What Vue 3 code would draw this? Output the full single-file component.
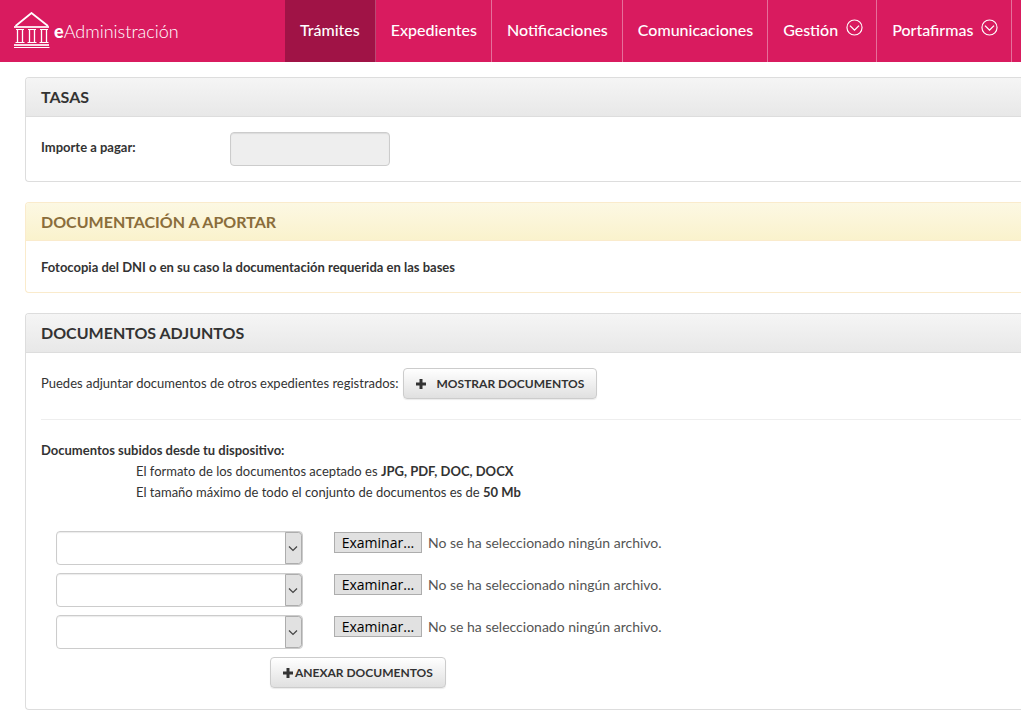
<script setup>
import { ref } from 'vue'

const tabs = [
  { label: 'Trámites', active: true },
  { label: 'Expedientes' },
  { label: 'Notificaciones' },
  { label: 'Comunicaciones' },
  { label: 'Gestión', menu: true },
  { label: 'Portafirmas', menu: true },
]

const uploads = ref([
  { id: 1, type: '', file: '' },
  { id: 2, type: '', file: '' },
  { id: 3, type: '', file: '' },
])
const pickers = ref([])

function choose(index) {
  pickers.value[index].click()
}

function picked(event, upload) {
  upload.file = event.target.files[0]?.name || ''
}
</script>

<template>
  <header class="topbar">
    <a class="brand" href="#">
      <svg class="brand-icon" viewBox="0 0 36 37" aria-hidden="true">
        <g fill="none" stroke="#fff">
          <path d="M1.5 14 17.5 1 34 14" stroke-width="1.8" />
          <path d="M0 15h35" stroke-width="2" opacity=".85" />
          <path d="M2 17.500h8M14 17.500h8M26 17.500h8" stroke-width="1" />
          <path d="M3.500 18v13M8.500 18v13M15.500 18v13M20.500 18v13M27.500 18v13M32.500 18v13" stroke-width="1.300" />
          <path d="M1.500 30.5h9M13.500 30.5h9M25.500 30.5h9" stroke-width="1" />
          <path d="M0 33h35" stroke-width="2" opacity=".85" />
          <path d="M0 35.5h35.500" stroke-width="1.2" />
        </g>
      </svg>
      <span class="brand-name"><b>e</b>Administración</span>
    </a>
    <nav class="tabs">
      <a v-for="tab in tabs" :key="tab.label" class="tab" :class="{ active: tab.active, menu: tab.menu }" href="#">
        {{ tab.label }}
        <svg v-if="tab.menu" class="tab-icon" viewBox="0 0 18 18" aria-hidden="true">
          <circle cx="9" cy="9" r="8" fill="none" stroke="#fff" stroke-width="1.2" />
          <path d="M4.200 7 9 11.800 13.800 7" fill="none" stroke="#fff" stroke-width="1.4" />
        </svg>
      </a>
    </nav>
  </header>

  <main class="content">
    <section class="panel">
      <h2 class="panel-title">TASAS</h2>
      <div class="panel-body fee">
        <label class="fee-label" for="importe">Importe a pagar:</label>
        <input id="importe" class="fee-input" type="text" readonly>
      </div>
    </section>

    <section class="panel warning">
      <h2 class="panel-title">DOCUMENTACIÓN A APORTAR</h2>
      <div class="panel-body">
        <p><b>Fotocopia del DNI o en su caso la documentación requerida en las bases</b></p>
      </div>
    </section>

    <section class="panel">
      <h2 class="panel-title">DOCUMENTOS ADJUNTOS</h2>
      <div class="panel-body attachments">
        <div class="other">
          <span>Puedes adjuntar documentos de otros expedientes registrados:</span>
          <button class="btn wide-gap" type="button">
            <svg class="plus" viewBox="0 0 10 10" aria-hidden="true"><path d="M5 0v10M0 5h10" stroke="#333" stroke-width="3" /></svg>
            MOSTRAR DOCUMENTOS
          </button>
        </div>
        <hr class="rule">
        <p><b>Documentos subidos desde tu dispositivo:</b></p>
        <p class="hint">El formato de los documentos aceptado es <b>JPG, PDF, DOC, DOCX</b></p>
        <p class="hint">El tamaño máximo de todo el conjunto de documentos es de <b>50 Mb</b></p>

        <div class="uploads">
          <div v-for="(upload, index) in uploads" :key="upload.id" class="upload">
            <div class="select">
              <select v-model="upload.type" aria-label="Tipo de documento">
                <option value=""></option>
              </select>
              <svg class="select-arrow" viewBox="0 0 17 32" aria-hidden="true">
                <path d="M0 0h14q3 0 3 3v26q0 3-3 3H0z" fill="#e1e1e1" />
                <path d="M.5.5h13q3 0 3 3v25q0 3-3 3H.5z" fill="none" stroke="#adadad" />
                <path d="M4 14.500l4 4 4-4" fill="none" stroke="#444" stroke-width="1.200" />
              </svg>
            </div>
            <div class="picker">
              <input ref="pickers" type="file" hidden aria-label="Archivo" @change="picked($event, upload)">
              <button class="browse" type="button" @click="choose(index)">Examinar...</button>
              <span>{{ upload.file || 'No se ha seleccionado ningún archivo.' }}</span>
            </div>
          </div>
        </div>
        <button class="btn attach" type="button">
          <svg class="plus" viewBox="0 0 10 10" aria-hidden="true"><path d="M5 0v10M0 5h10" stroke="#333" stroke-width="3" /></svg>
          ANEXAR DOCUMENTOS
        </button>
      </div>
    </section>
  </main>
</template>

<style>
body {
  margin: 0;
  background: #fff;
  overflow-x: hidden;
}
</style>

<style scoped>
.topbar,
.content {
  font-family: Lato, "Liberation Sans", sans-serif;
  font-size: 13px;
  line-height: 21px;
  color: #333;
}
.topbar {
  display: flex;
  height: 62px;
  background: #d91b5f;
}
.brand {
  display: flex;
  align-items: center;
  gap: 4px;
  flex: 0 0 271px;
  padding: 0 0 2px 14px;
  color: #fff;
  text-decoration: none;
}
.brand-icon {
  width: 36px;
  height: 37px;
}
.brand-name {
  font-size: 18px;
  font-weight: 300;
  padding-top: 2px;
}
.brand-name b {
  font-weight: 900;
}
.tabs {
  display: flex;
  min-width: 0;
}
.tab {
  display: flex;
  align-items: center;
  gap: 8px;
  padding: 0 14px 3px 15px;
  border-right: 1px solid #e5709a;
  color: #fff;
  font-size: 16px;
  font-weight: 500;
  text-decoration: none;
  white-space: nowrap;
}
.tab.active {
  padding-right: 15px;
  background: #a01346;
  border-right-color: #b84a72;
}
.tab.menu {
  padding-right: 13px;
}
.tab-icon {
  width: 17px;
  height: 17px;
  margin-bottom: 4px;
}
.content {
  display: flex;
  flex-direction: column;
  gap: 20px;
  padding: 15px 0 13px 25px;
}
.panel {
  border: 1px solid #ddd;
  border-right: 0;
  border-radius: 4px 0 0 4px;
  overflow: hidden;
}
.panel-title {
  margin: 0;
  padding: 0 15px;
  border-bottom: 1px solid #ddd;
  background: linear-gradient(#f5f5f5, #e8e8e8);
  font-size: 16px;
  font-weight: 700;
  line-height: 38px;
}
.warning {
  border-color: #faebcc;
}
.warning .panel-title {
  border-bottom: 0;
  background: linear-gradient(#fcf8e3, #faf2cc);
  box-shadow: inset 0 -1px #faebcc;
  color: #8a6d3b;
}
.panel-body {
  padding: 15px;
}
.panel-body p {
  margin: 0;
}
.warning .panel-body {
  padding: 16px 15px 14px;
}
.fee {
  display: flex;
}
.fee-label {
  width: 189px;
  padding-top: 5px;
  font-weight: 700;
}
.fee-input {
  box-sizing: border-box;
  width: 160px;
  height: 34px;
  padding: 6px 12px;
  border: 1px solid #ccc;
  border-radius: 4px;
  background: #eee;
  box-shadow: inset 0 1px 1px rgba(0, 0, 0, 0.08);
  font: inherit;
}
.attachments {
  padding-right: 0;
  padding-bottom: 21px;
}
.other {
  display: flex;
  align-items: center;
  gap: 4px;
}
.btn {
  display: flex;
  align-items: center;
  gap: 2px;
  height: 31px;
  padding: 0 12px;
  border: 1px solid #ccc;
  border-radius: 4px;
  background: linear-gradient(#fff, #e0e0e0);
  box-shadow: 0 1px 1px rgba(0, 0, 0, 0.08);
  color: #333;
  font: 700 12px/18px Lato, "Liberation Sans", sans-serif;
}
.wide-gap {
  gap: 11px;
}
.plus {
  width: 10px;
  height: 10px;
}
.rule {
  margin: 20px 0;
  border: 0;
  border-top: 1px solid #eee;
}
.panel-body .hint {
  margin-left: 95px;
}
.uploads {
  display: grid;
  gap: 8px;
  padding: 28px 15px 8px;
}
.upload {
  display: flex;
  gap: 31px;
}
.select {
  position: relative;
  width: 247px;
}
.select select {
  appearance: none;
  display: block;
  box-sizing: border-box;
  width: 100%;
  height: 34px;
  padding: 6px 24px 6px 12px;
  border: 1px solid #ccc;
  border-radius: 4px;
  background: #fff;
  box-shadow: inset 0 1px 1px rgba(0, 0, 0, 0.08);
  font: inherit;
}
.select-arrow {
  position: absolute;
  top: 1px;
  right: 1px;
  width: 17px;
  height: 32px;
  pointer-events: none;
}
.picker {
  display: flex;
  align-items: center;
  gap: 6px;
  height: 23px;
  color: #555;
  font-size: 14px;
}
.browse {
  width: 88px;
  height: 21px;
  padding: 0;
  border: 1px solid #adadad;
  background: #e1e1e1;
  color: #000;
  font: 14px/19px "Open Sans", sans-serif;
}
.attach {
  margin-left: 229px;
}
</style>
